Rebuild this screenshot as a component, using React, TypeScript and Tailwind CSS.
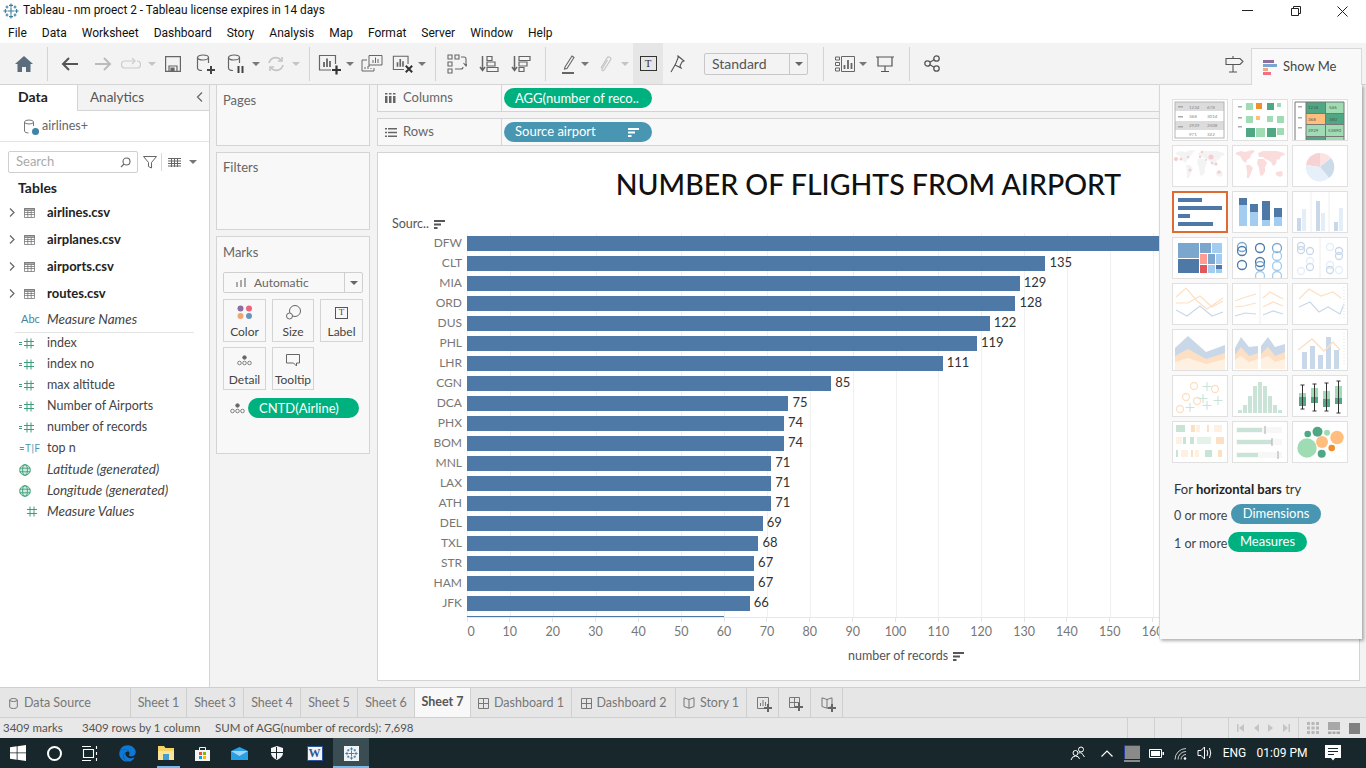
import React from 'react';
import { FaEdge } from 'react-icons/fa';

const BARS: [string, number][] = [
  ['DFW', 172], ['CLT', 135], ['MIA', 129], ['ORD', 128], ['DUS', 122], ['PHL', 119], ['LHR', 111],
  ['CGN', 85], ['DCA', 75], ['PHX', 74], ['BOM', 74], ['MNL', 71], ['LAX', 71], ['ATH', 71],
  ['DEL', 69], ['TXL', 68], ['STR', 67], ['HAM', 67], ['JFK', 66], ['', 60],
];
const PX_PER_UNIT = 4.285;
const TICKS = Array.from({ length: 18 }, (_, i) => i * 10);

const Caret = ({ color = '#777' }: { color?: string }) => (
  <svg width="8" height="4" viewBox="0 0 8 4" className="shrink-0"><path d="M0 0h8L4 4z" fill={color} /></svg>
);

const Cell = ({ className, children }: { className: string; children?: React.ReactNode }) => (
  <div className={`flex items-center justify-center shrink-0 h-full ${className}`}>{children}</div>
);

const Sep = () => <div className="w-px h-[34px] bg-[#d4d4d4] shrink-0" />;

// snowflake-ish tableau mark, made of plus signs
const TableauLogo = ({ size = 16, color = '#3d7f9e' }: { size?: number; color?: string }) => {
  const plus = (x: number, y: number, r: number, k: string) => (
    <path key={k} d={`M${x - r} ${y}H${x + r}M${x} ${y - r}V${y + r}`} />
  );
  return (
    <svg width={size} height={size} viewBox="0 0 20 20" fill="none" stroke={color} strokeWidth="1.4" className="shrink-0">
      {plus(10, 10, 4, 'c')}
      {plus(10, 3, 2.5, 't')}
      {plus(10, 17, 2.5, 'b')}
      {plus(3, 10, 2.5, 'l')}
      {plus(17, 10, 2.5, 'r')}
      {plus(5, 5, 1.8, 'a')}
      {plus(15, 5, 1.8, 'd')}
      {plus(5, 15, 1.8, 'e')}
      {plus(15, 15, 1.8, 'f')}
    </svg>
  );
};

const Cyl = ({ children }: { children?: React.ReactNode }) => (
  <svg width="22" height="22" viewBox="0 0 22 22" fill="none" stroke="#666" strokeWidth="1.2">
    <ellipse cx="9" cy="4.5" rx="5.5" ry="2.5" />
    <path d="M3.5 4.5V15q0 2.5 4.5 2.5M14.5 4.5V10" />
    {children}
  </svg>
);

const ChartBox = ({ children }: { children?: React.ReactNode }) => (
  <svg width="24" height="22" viewBox="0 0 24 22" fill="none" stroke="#666" strokeWidth="1.2">
    <path d="M13 17H1.5V2.5h16V11" />
    <path d="M6 14V9M9 14V5.5M12 14V8" strokeWidth="1.8" />
    {children}
  </svg>
);

function Toolbar() {
  return (
    <div className="h-[42px] bg-[#f3f3f3] border-b border-[#d4d4d4] flex items-center shrink-0">
      <Cell className="w-[47px]">
        <svg width="18" height="16" viewBox="0 0 18 16"><path d="M9 0L0 8h2.5v8h4.5v-5h4v5h4.5V8H18z" fill="#5b6d7c" /></svg>
      </Cell>
      <Sep />
      <Cell className="w-[44px]">
        <svg width="18" height="16" viewBox="0 0 18 16" fill="none" stroke="#555" strokeWidth="2"><path d="M17 8H2M8 2L2 8l6 6" /></svg>
      </Cell>
      <Cell className="w-[22px]">
        <svg width="18" height="16" viewBox="0 0 18 16" fill="none" stroke="#bbb" strokeWidth="2"><path d="M1 8h15M10 2l6 6-6 6" /></svg>
      </Cell>
      <Cell className="w-[34px]">
        <svg width="20" height="12" viewBox="0 0 20 12" fill="none" stroke="#ccc" strokeWidth="1.2"><path d="M13 3H4a3 3 0 000 7h12a3 3 0 000-7" /><path d="M11 0l3 3-3 3" /></svg>
      </Cell>
      <Cell className="w-[8px]"><Caret color="#c4c4c4" /></Cell>
      <Cell className="w-[34px]">
        <svg width="16" height="16" viewBox="0 0 16 16" fill="none" stroke="#666" strokeWidth="1.2"><path d="M.6.6h14.8v14.8H.6z" /><path d="M4 15v-5h8v5" /><path d="M6 12h3v3H6z" fill="#666" /></svg>
      </Cell>
      <Cell className="w-[30px]">
        <Cyl><path d="M13 17h8M17 13v8" stroke="#444" strokeWidth="2" /></Cyl>
      </Cell>
      <Cell className="w-[32px]">
        <Cyl><path d="M13.5 13v7M17.5 13v7" stroke="#444" strokeWidth="2" /></Cyl>
      </Cell>
      <Cell className="w-[8px]"><Caret /></Cell>
      <Cell className="w-[32px]">
        <svg width="18" height="16" viewBox="0 0 18 16" fill="none" stroke="#c4c4c4" strokeWidth="1.6"><path d="M2 7a7 7 0 0112-3M16 9a7 7 0 01-12 3" /><path d="M11 5h4V1M7 11H3v4" /></svg>
      </Cell>
      <Cell className="w-[8px]"><Caret color="#c4c4c4" /></Cell>
      <div className="w-[9px] shrink-0" />
      <Sep />
      <div className="w-[2px] shrink-0" />
      <Cell className="w-[36px]">
        <ChartBox><path d="M14 17h9M18.5 12.500v9" stroke="#333" strokeWidth="2.2" /></ChartBox>
      </Cell>
      <Cell className="w-[4px]"><Caret /></Cell>
      <Cell className="w-[40px]">
        <svg width="22" height="20" viewBox="0 0 22 20" fill="none" stroke="#666" strokeWidth="1"><path d="M8 13V1.500h13V11H8" /><path d="M12 9V6M14.500 9V3.500M17 9V5" /><path d="M6 6H1v11h12v-3" /><path d="M4 15v-2M7 15v-3M10 15v-1" /></svg>
      </Cell>
      <Cell className="w-[22px]">
        <ChartBox><path d="M15 13l7 7M22 13l-7 7" stroke="#333" strokeWidth="2.2" /></ChartBox>
      </Cell>
      <Cell className="w-[16px]"><Caret /></Cell>
      <div className="w-[5px] shrink-0" />
      <Sep />
      <Cell className="w-[42px]">
        <svg width="20" height="20" viewBox="0 0 20 20" fill="none" stroke="#666" strokeWidth="1.1"><path d="M1 1h4v4H1zM8 1h4v4H8zM1 8h4v4H1zM1 15h4v4H1z" /><path d="M14 3h3a2 2 0 012 2v6M16.500 9l2.500 3 1-2M8 15h6a2 2 0 002-2" /></svg>
      </Cell>
      <Cell className="w-[22px]">
        <svg width="20" height="18" viewBox="0 0 20 18" fill="none" stroke="#666" strokeWidth="1.2"><path d="M3.500 1v14M1 12l2.500 3.500L6 12" strokeWidth="1.500" /><path d="M8 1.500h5v4H8zM8 7h8v4H8zM8 12.500h11v4H8z" /></svg>
      </Cell>
      <Cell className="w-[42px]">
        <svg width="20" height="18" viewBox="0 0 20 18" fill="none" stroke="#666" strokeWidth="1.2"><path d="M3.500 1v14M1 12l2.500 3.500L6 12" strokeWidth="1.500" /><path d="M8 1.500h11v4H8zM8 7h8v4H8zM8 12.500h5v4H8z" /></svg>
      </Cell>
      <div className="w-[3px] shrink-0" />
      <Sep />
      <Cell className="w-[29px] justify-end">
        <svg width="14" height="20" viewBox="0 0 14 20" fill="none" stroke="#666" strokeWidth="1.100"><path d="M4 13L11 2l2 1.500L6 14.500 3.500 15z" /><path d="M1 19h12" stroke="#555" strokeWidth="1.800" /></svg>
      </Cell>
      <Cell className="w-[14px] justify-end"><Caret /></Cell>
      <Cell className="w-[23px] justify-end">
        <svg width="14" height="18" viewBox="0 0 14 18" fill="none" stroke="#c4c4c4" strokeWidth="1.200"><path d="M3 13L9 3a2 2 0 013.500 2L6 15a1 1 0 01-2-1l5.500-9" /></svg>
      </Cell>
      <Cell className="w-[17px] justify-end"><Caret color="#c4c4c4" /></Cell>
      <div className="w-[4px] shrink-0" />
      <Cell className="w-[30px] h-[30px] bg-[#e6e6e6]">
        <div className="w-[17px] h-[15px] border border-[#333] flex items-center justify-center text-[11px] leading-none font-['Liberation_Serif',serif] text-[#333]">T</div>
      </Cell>
      <Cell className="w-[28px]">
        <svg width="15" height="18" viewBox="0 0 15 18" fill="none" stroke="#555" strokeWidth="1.100"><path d="M8 1l6 5-2 1-2 4 1 2-6-3 1-2 2-5zM5 10l-4 7" /></svg>
      </Cell>
      <div className="w-[13px] shrink-0" />
      <div className="w-[104px] h-[22px] shrink-0 border border-[#c8c8c8] rounded-[2px] flex items-center text-[14px] text-[#555]">
        <div className="flex-1 pl-[7px]">Standard</div>
        <div className="w-[18px] h-full border-l border-[#c8c8c8] flex items-center justify-center"><Caret color="#666" /></div>
      </div>
      <div className="w-[15px] shrink-0" />
      <Sep />
      <Cell className="w-[31px] justify-end">
        <svg width="20" height="16" viewBox="0 0 20 16" fill="none" stroke="#666" strokeWidth="1"><path d="M.5 1h4v3h-4zM.5 6.500h4v3h-4zM.5 12h4v3h-4zM6.500.5h13v15h-13z" /><path d="M9.500 13V9M13 13V4M16.500 13V7" strokeWidth="1.800" /></svg>
      </Cell>
      <Cell className="w-[12px] justify-end"><Caret /></Cell>
      <Cell className="w-[27px] justify-end">
        <svg width="18" height="16" viewBox="0 0 18 16" fill="none" stroke="#555" strokeWidth="1.200"><path d="M0 1h18M2 1v9h14V1M9 10v5M5 15.500h8" /></svg>
      </Cell>
      <div className="w-[15px] shrink-0" />
      <Sep />
      <Cell className="w-[30px] justify-end">
        <svg width="16" height="17" viewBox="0 0 16 17" fill="none" stroke="#555" strokeWidth="1.300"><circle cx="3.500" cy="8.500" r="2.700" /><circle cx="12.500" cy="3.500" r="2.700" /><circle cx="12.500" cy="13.500" r="2.700" /><path d="M6 7.200l4-2.400M6 9.800l4 2.400" /></svg>
      </Cell>
      <div className="flex-1" />
      <Cell className="w-[20px] mr-[122px]">
        <svg width="19" height="18" viewBox="0 0 19 18" fill="none" stroke="#555" strokeWidth="1.100"><path d="M1 3.500h14l3 3-3 3H1zM8 1v2.500M8 9.500V17M4 17h8" /></svg>
      </Cell>
    </div>
  );
}

const HashIcon = ({ eq = true }: { eq?: boolean }) => (
  <svg width="16" height="11" viewBox="0 0 16 11" fill="none" stroke="#3c9d7a" strokeWidth="1">
    {eq && <path d="M0 4.500h3M0 6.500h3" />}
    <path d="M5 3.500h10M5 7.500h10M8 .5v10M12 .5v10" />
  </svg>
);

const GlobeIcon = () => (
  <svg width="12" height="12" viewBox="0 0 12 12" fill="none" stroke="#3c9d7a" strokeWidth="0.900">
    <circle cx="6" cy="6" r="5.300" fill="#d4ece2" />
    <ellipse cx="6" cy="6" rx="2.400" ry="5.300" />
    <path d="M.7 4.200h10.600M.7 7.800h10.600" />
  </svg>
);

const TableIcon = () => (
  <svg width="11" height="11" viewBox="0 0 11 11" fill="none" stroke="#777" strokeWidth="0.800">
    <path d="M.5 1.500h10v9H.5z" /><path d="M.5 1.500h10v2H.5z" fill="#aaa" /><path d="M.5 5.500h10M.5 7.500h10M3.800 3.500v7M7.200 3.500v7" />
  </svg>
);

function DataPane() {
  const tables = ['airlines.csv', 'airplanes.csv', 'airports.csv', 'routes.csv'];
  const fields: [React.ReactNode, string, boolean][] = [
    [<HashIcon />, 'index', false],
    [<HashIcon />, 'index no', false],
    [<HashIcon />, 'max altitude', false],
    [<HashIcon />, 'Number of Airports', false],
    [<HashIcon />, 'number of records', false],
    [<span className="text-[10px] text-[#4996b2] tracking-[0.5px] font-['Roboto',sans-serif]">=T|F</span>, 'top n', false],
    [<GlobeIcon />, 'Latitude (generated)', true],
    [<GlobeIcon />, 'Longitude (generated)', true],
    [<span className="pl-[3px] flex"><HashIcon eq={false} /></span>, 'Measure Values', true],
  ];
  return (
    <div className="w-[210px] shrink-0 bg-white border-r border-[#d4d4d4] flex flex-col">
      <div className="h-[26px] flex text-[13.500px] shrink-0">
        <div className="w-[77px] flex items-center pl-[18px] pb-[3px] font-bold text-[#222] text-[14px]">Data</div>
        <div className="flex-1 flex items-center justify-between pl-[12px] pr-[6px] pb-px text-[#555] bg-[#f3f3f3] border-l border-b border-[#d4d4d4]">
          <span>Analytics</span>
          <svg width="7" height="10" viewBox="0 0 7 10" fill="none" stroke="#666" strokeWidth="1.200"><path d="M6 .5L1.500 5 6 9.500" /></svg>
        </div>
      </div>
      <div className="h-[31px] shrink-0 border-b border-[#e4e4e4] flex items-center pl-[23px] gap-[6px] text-[12.500px] text-[#666]">
        <span className="relative flex">
          <svg width="13" height="15" viewBox="0 0 13 15" fill="none" stroke="#777" strokeWidth="1"><ellipse cx="6" cy="3" rx="4.500" ry="2" /><path d="M1.500 3v9q0 2 4 2M10.500 3v4" /></svg>
          <span className="absolute right-[-3px] bottom-[-1px] w-[7px] h-[7px] rounded-full bg-[#3f84a8]" />
        </span>
        airlines+
      </div>
      <div className="flex items-center mt-[9px] h-[22px] pl-[8px] shrink-0">
        <div className="w-[130px] h-[22px] border border-[#cfcfcf] rounded-[2px] flex items-center justify-between pl-[7px] pr-[6px] text-[13px] text-[#aaa]">
          Search
          <svg width="11" height="11" viewBox="0 0 11 11" fill="none" stroke="#666" strokeWidth="1.100"><circle cx="6.500" cy="4.500" r="3.500" /><path d="M4 7l-3 3" /></svg>
        </div>
        <svg width="14" height="13" viewBox="0 0 14 13" fill="none" stroke="#666" strokeWidth="1" className="ml-[5px]"><path d="M.5.500h13L8.500 6.500V12l-3-1.500v-4z" /></svg>
        <div className="w-px h-[18px] bg-[#d8d8d8] ml-[4px]" />
        <svg width="13" height="9" viewBox="0 0 13 9" fill="none" stroke="#666" strokeWidth="1" className="ml-[6px]"><path d="M0 .5h13M0 3h13M0 5.500h13M0 8h13M3.500 0v9M6.500 0v9M9.500 0v9" /></svg>
        <span className="ml-[8px]"><Caret /></span>
      </div>
      <div className="mt-[6px] h-[18px] pl-[18px] text-[14px] font-bold text-[#222] leading-[18px] shrink-0">Tables</div>
      <div className="mt-[2px] flex flex-col">
        {tables.map(t => (
          <div key={t} className="h-[27px] flex items-center">
            <svg width="6" height="9" viewBox="0 0 6 9" fill="none" stroke="#666" strokeWidth="1.200" className="ml-[9px]"><path d="M1 .5L5 4.500 1 8.500" /></svg>
            <span className="ml-[9px] flex"><TableIcon /></span>
            <span className="ml-[12px] text-[13px] font-bold text-[#222]">{t}</span>
          </div>
        ))}
      </div>
      <div className="h-[26px] mx-[15px] border-b border-[#e4e4e4] flex items-center text-[13.500px] text-[#444]">
        <span className="w-[32px] pl-[6px] text-[11px] text-[#4a7f9e]">Abc</span>
        <span className="italic">Measure Names</span>
      </div>
      <div className="flex flex-col">
        {fields.map(([icon, name, italic]) => (
          <div key={name} className="h-[21px] flex items-center text-[12.500px] text-[#444]">
            <div className="w-[47px] pl-[19px] flex items-center">{icon}</div>
            <span className={italic ? 'italic text-[13.500px]' : ''}>{name}</span>
          </div>
        ))}
      </div>
    </div>
  );
}

const MarkBtn = ({ label, children }: { label: string; children: React.ReactNode }) => (
  <div className="h-[43px] border border-[#d4d4d4] flex flex-col items-center text-[12px] text-[#444] leading-[14px]">
    <div className="h-[25px] flex items-center justify-center">{children}</div>
    {label}
  </div>
);

const DetailIcon = () => (
  <svg width="15" height="11" viewBox="0 0 15 11" fill="none" stroke="#666" strokeWidth="0.800">
    <circle cx="7.500" cy="2.500" r="1.800" fill="#666" /><circle cx="2.500" cy="8" r="1.800" /><circle cx="7.500" cy="8" r="1.800" /><circle cx="12.500" cy="8" r="1.800" />
  </svg>
);

function MiddleCol() {
  const card = 'bg-[#f8f8f8] border border-[#d4d4d4] px-[6px] pt-[6px] text-[13px] text-[#666] leading-[17px]';
  return (
    <div className="w-[167px] shrink-0 pl-[6px] pr-[7px] flex flex-col gap-[6px]">
      <div className={`h-[61px] border-t-0 ${card}`}><div className="pt-px">Pages</div></div>
      <div className={`h-[78px] ${card}`}>Filters</div>
      <div className={`h-[218px] ${card}`}>
        <div className="pt-px">Marks</div>
        <div className="mt-[11px] h-[21px] w-[140px] border border-[#cfcfcf] rounded-[2px] flex items-center text-[12px] text-[#666]">
          <svg width="11" height="9" viewBox="0 0 11 9" fill="#aaa" className="ml-[12px]"><path d="M0 4h2v5H0zM4 2h2v7H4zM8 0h2v9H8z" /></svg>
          <span className="ml-[7px] flex-1">Automatic</span>
          <div className="w-[18px] h-full border-l border-[#cfcfcf] flex items-center justify-center"><Caret color="#666" /></div>
        </div>
        <div className="mt-[6px] grid grid-cols-[43px_42px_43px] gap-x-[6px] gap-y-[5px]">
          <MarkBtn label="Color">
            <svg width="16" height="15" viewBox="0 0 16 15"><circle cx="3.500" cy="3.500" r="3" fill="#8c6fa0" /><circle cx="12" cy="3.500" r="3" fill="#f0637a" /><circle cx="3.500" cy="11" r="3" fill="#f2a56e" /><circle cx="12" cy="11" r="3" fill="#6a94bd" /></svg>
          </MarkBtn>
          <MarkBtn label="Size">
            <svg width="15" height="15" viewBox="0 0 15 15" fill="none" stroke="#666" strokeWidth="1"><circle cx="9" cy="6" r="5.500" /><circle cx="3.500" cy="11" r="3" fill="#f8f8f8" /></svg>
          </MarkBtn>
          <MarkBtn label="Label">
            <div className="w-[13px] h-[12px] border border-[#555] flex items-center justify-center text-[9px] leading-none font-['Liberation_Serif',serif] text-[#444]">T</div>
          </MarkBtn>
          <MarkBtn label="Detail"><DetailIcon /></MarkBtn>
          <MarkBtn label="Tooltip">
            <svg width="14" height="13" viewBox="0 0 14 13" fill="none" stroke="#666" strokeWidth="1"><path d="M.5.500h13v8.500h-3v3l-3-3H.5z" /></svg>
          </MarkBtn>
        </div>
        <div className="mt-[8px] flex items-center">
          <span className="ml-[7px] flex"><DetailIcon /></span>
          <div className="ml-[3px] w-[111px] h-[20px] rounded-full bg-[#00b180] text-white text-[13px] leading-[20px] pl-[11px]">CNTD(Airline)</div>
        </div>
      </div>
    </div>
  );
}

const Shelf = ({ icon, label, pill }: { icon: React.ReactNode; label: string; pill: React.ReactNode }) => (
  <div className="flex border border-[#d4d4d4] border-t-0 bg-[#f8f8f8] shrink-0 h-[27px]">
    <div className="w-[124px] border-r border-[#d4d4d4] flex items-center text-[13px] text-[#666]">
      <span className="w-[25px] pl-[7px] flex">{icon}</span>
      {label}
    </div>
    <div className="flex items-center pl-[2px]">{pill}</div>
  </div>
);

const SortIcon = ({ color = '#555' }: { color?: string }) => (
  <svg width="11" height="9" viewBox="0 0 11 9" fill={color} className="shrink-0"><path d="M0 0h11v2H0zM0 3.500h7v2H0zM0 7h3.500v2H0z" /></svg>
);

function ChartCard() {
  return (
    <div className="flex-1 bg-white border border-[#d4d4d4] overflow-hidden flex flex-col font-['Lato',sans-serif]">
      <div className="pt-[14px] h-[49px] text-center text-[28.500px] leading-[34px] font-medium text-[#111] shrink-0">NUMBER OF FLIGHTS FROM AIRPORT</div>
      <div className="mt-[14px] h-[16px] pl-[14px] flex items-center gap-[5px] text-[12.500px] text-[#555] shrink-0">
        Sourc.. <SortIcon />
      </div>
      <div className="relative mt-px h-[384px] overflow-hidden shrink-0">
        {TICKS.map(t => (
          <div key={t} className="absolute top-0 bottom-0 w-px bg-[#f0f0f0]" style={{ left: 89 + t * PX_PER_UNIT }} />
        ))}
        <div className="relative flex flex-col">
          {BARS.map(([code, v], i) => (
            <div key={i} className="h-[20px] flex items-center shrink-0">
              <div className="w-[84px] shrink-0 text-right text-[12px] text-[#777]">{code}</div>
              <div className="ml-[5px] h-[15px] bg-[#4e79a7] shrink-0" style={{ width: v * PX_PER_UNIT }} />
              {code && <div className="ml-[4px] text-[13px] text-[#333]">{v}</div>}
            </div>
          ))}
        </div>
      </div>
      <div className="relative h-[30px] border-t border-[#e8e8e8] ml-[89px] shrink-0 text-[12.500px] text-[#777]">
        {TICKS.map(t => (
          <div key={t} className="absolute top-0 flex flex-col items-center w-[30px] -ml-[15px]" style={{ left: t * PX_PER_UNIT }}>
            <div className="w-px h-[4px] bg-[#e4e4e4]" />
            <div className={`mt-[1px] leading-[18px] ${t === 0 ? 'pl-[8px]' : ''}`}>{t}</div>
          </div>
        ))}
      </div>
      <div className="mt-px pl-[470px] h-[16px] flex items-center gap-[5px] text-[12.500px] text-[#555] shrink-0">
        number of records <SortIcon />
      </div>
    </div>
  );
}

function MainCol() {
  return (
    <div className="flex-1 min-w-0 flex flex-col pr-[6px] pb-[6px]">
      <Shelf
        icon={<svg width="11" height="10" viewBox="0 0 11 10" fill="#666"><path d="M0 3h2.500v7H0zM4 3h2.500v7H4zM8 3h2.500v7H8zM0 0h2.500v1.500H0zM4 0h2.500v1.500H4zM8 0h2.500v1.500H8z" /></svg>}
        label="Columns"
        pill={<div className="w-[148px] h-[20px] rounded-full bg-[#00b180] text-white text-[13px] leading-[20px] pl-[11px]">AGG(number of reco..</div>}
      />
      <div className="h-[6px] shrink-0" />
      <div className="border-t border-[#d4d4d4]">
        <Shelf
          icon={<svg width="12" height="9" viewBox="0 0 12 9" fill="#666"><path d="M0 0h2v1.500H0zM3 0h9v1.500H3zM0 3.700h2v1.500H0zM3 3.700h9v1.500H3zM0 7.500h2V9H0zM3 7.500h9V9H3z" /></svg>}
          label="Rows"
          pill={
            <div className="w-[148px] h-[20px] rounded-full bg-[#4996b2] text-white text-[13px] flex items-center pl-[11px] pr-[13px] justify-between">
              Source airport <SortIcon color="#fff" />
            </div>
          }
        />
      </div>
      <div className="h-[6px] shrink-0" />
      <ChartCard />
    </div>
  );
}

const Thumb = ({ selected, children }: { selected?: boolean; children: React.ReactNode }) => (
  <div className={`w-[56px] h-[42px] bg-white overflow-hidden ${selected ? 'border-2 border-[#de6b32]' : 'border border-[#e0e0e0]'}`}>
    <svg viewBox={selected ? '2 2 52 38' : '1 1 54 40'} className="w-full h-full block" fill="none">{children}</svg>
  </div>
);

const WORLD = 'M3 8L9 6L13 7L20 5L23 6L19 10L18 13L15 15L14 18L11 16L8 11L5 10ZM14 20L18 20L21 23L19 28L17 33L15 33L15 27ZM26 8L31 6L38 6L45 6L52 8L53 10L49 11L47 15L45 14L44 19L41 21L39 17L36 15L33 14L31 12L27 12ZM26 14L32 14L35 18L33 22L33 27L30 31L28 30L27 23L25 18ZM44 27L50 26L51 30L48 32L44 30Z';
const G1 = '#9fdcb3';
const G2 = '#4fa783';
const O1 = '#ffbe7d';
const O2 = '#f28e2b';
const B1 = '#4e79a7';
const B2 = '#a3cdf0';
const FB = '#c9d8e8';
const FB2 = '#e3eef9';
const FO = '#fde0c4';
const FO2 = '#fff1e2';
const FG = '#c9e4d6';

const rects = (list: [number, number, number, number, string][]) =>
  list.map(([x, y, w, h, c], i) => <rect key={i} x={x} y={y} width={w} height={h} fill={c} />);

const rings = (list: [number, number, number, string][], sw = 1.300) =>
  list.map(([x, y, r, c], i) => <circle key={i} cx={x} cy={y} r={r} stroke={c} strokeWidth={sw} />);

const lines = (list: [string, string][], sw = 1.200) =>
  list.map(([p, c], i) => <polyline key={i} points={p} stroke={c} strokeWidth={sw} fill="none" />);

const THUMBS: React.ReactNode[] = [
  <g fontSize="4.500" fill="#888" fontFamily="Lato, sans-serif">
    {rects([[3, 3, 49, 9, '#dcdcdc'], [3, 22, 49, 9, '#dcdcdc'], [6, 7, 5, 1.500, '#aaa'], [6, 17, 5, 1.500, '#aaa'], [6, 27, 5, 1.500, '#aaa']])}
    <rect x="3" y="3" width="49" height="36" stroke="#b5b5b5" fill="none" />
    <text x="17" y="10">1234</text><text x="35" y="10">678</text>
    <text x="17" y="19">368</text><text x="35" y="19">3014</text>
    <text x="17" y="28">2929</text><text x="35" y="28">2508</text>
    <text x="17" y="37">971</text><text x="35" y="37">322</text>
  </g>,
  <g>{rects([[6, 7, 4, 1.500, '#aaa'], [6, 18, 4, 1.500, '#aaa'], [6, 27, 4, 1.500, '#aaa'], [14, 4, 7, 7, G1], [24, 4, 6, 6, O2], [35, 4, 7, 7, G2], [45, 4, 4, 4, G1], [14, 17, 7, 7, G1], [24, 17, 4, 4, O1], [35, 17, 6, 6, G1], [45, 17, 7, 7, G1], [14, 29, 9, 9, G2], [24, 29, 9, 9, G1], [35, 29, 9, 9, G2], [45, 29, 7, 7, G1]])}</g>,
  <g fontSize="4.500" fill="#555" fontFamily="Lato, sans-serif">
    {rects([[6, 7, 4, 1.500, '#aaa'], [6, 18, 4, 1.500, '#aaa'], [6, 28, 4, 1.500, '#aaa'], [14, 3, 19, 11, G2], [34, 3, 18, 11, G1], [14, 15, 19, 10, O1], [34, 15, 18, 10, G2], [14, 26, 19, 11, G1], [34, 26, 18, 11, G1], [14, 38, 19, 3, G2], [34, 38, 18, 3, G1]])}
    <path d="M3 3H52V41M3 3V41M14 3V41M33.500 3V41M14 14.500H52M14 25.500H52M14 37.500H52" stroke="#777" strokeWidth="1" fill="none" />
    <text x="16" y="10">1234</text><text x="37" y="10">546</text>
    <text x="16" y="22">368</text><text x="37" y="22">380</text>
    <text x="16" y="33">2929</text><text x="36" y="33">53890</text>
  </g>,
  <g>
    <path d={WORLD} fill="#f3f3f3" />
    {[[4, 14, 2], [9, 14, 1.500], [16, 12, 1.200], [18, 25, 1.500], [28, 12, 1.200], [30, 7, 1.200], [40, 18, 1.200], [39, 12, 2.500], [44, 19, 1.500], [47, 27, 1.800], [34, 15, 1]].map(([x, y, r], i) => (
      <circle key={i} cx={x} cy={y} r={r} fill="#f6cccc" />
    ))}
  </g>,
  <path d={WORLD} fill="#fbdcdc" />,
  <g>
    <path d="M28 22L14 20A14 14 0 0128 8Z" fill="#f6d2d2" />
    <path d="M28 22V8A14 14 0 0139 13Z" fill="#fbe3e3" />
    <path d="M28 22L39 13A14 14 0 0137 33Z" fill="#ccdbe9" />
    <path d="M28 22L37 33A14 14 0 0114 20Z" fill="#e6f0fa" />
  </g>,
  <g>{rects([[6, 7, 24, 4, B1], [6, 15, 44, 4, B1], [6, 23, 12, 4, B1], [6, 31, 35, 4, B1]])}</g>,
  <g>{rects([[7, 7, 8, 7, B1], [7, 14, 8, 21, B2], [18, 13, 8, 8, B1], [18, 21, 8, 14, B2], [30, 10, 8, 19, B1], [30, 29, 8, 6, B2], [42, 17, 8, 9, B1], [42, 26, 8, 9, B2]])}</g>,
  <g>
    {rects([[5, 27, 4, 13, FB], [10, 18, 4, 22, FB2], [24, 10, 4, 30, FB], [29, 22, 4, 18, FB2], [42, 31, 4, 9, FB], [47, 17, 4, 23, FB2]])}
    <path d="M19 1V41M37 1V41" stroke="#eee" />
  </g>,
  <g>{rects([[6, 6, 21, 15, '#7ba7cf'], [6, 22, 21, 14, B1], [28, 6, 11, 10, '#7ba7cf'], [40, 6, 10, 10, B2], [28, 17, 7, 10, '#ff9d92'], [36, 17, 7, 10, '#7ba7cf'], [44, 17, 6, 10, B2], [28, 28, 7, 8, '#e15759'], [36, 28, 7, 8, B2], [44, 28, 6, 4, B1], [44, 32, 6, 4, B2]])}</g>,
  <g>{rings([[10, 10, 4.500, '#7ba7cf'], [10, 14, 4.500, B1], [10, 28, 4.500, B1], [28, 11, 4.500, B1], [28, 25, 4.500, B1], [28, 29, 4.500, '#7ba7cf'], [28, 39, 4.500, B2], [45, 11, 4.500, '#7ba7cf'], [45, 19, 4.500, B2], [45, 29, 4.500, B2], [45, 39, 4.500, B2]])}</g>,
  <g>
    {rings([[9, 9, 3.500, FB], [9, 13, 3.500, FB], [18, 14, 3.500, FB], [9, 34, 3.500, FB2], [18, 30, 3.500, FB], [18, 24, 3.500, FB2], [38, 10, 3.500, FB2], [47, 14, 3.500, FB], [47, 19, 3.500, FB], [38, 28, 3.500, FB2], [38, 33, 3.500, FB], [47, 33, 3.500, FB2]])}
    <path d="M28 1V41" stroke="#eee" />
  </g>,
  <g>{lines([['4,14 14,5 25,18 35,26 51,15', FO], ['4,20 16,20 28,13 40,24 51,18', FO], ['4,27 15,33 28,23 40,33 51,29', FB]])}</g>,
  <g>
    {lines([['3,18 11,15 24,11', FO], ['3,24 12,23 24,20', FO], ['3,33 13,30 24,31', FB], ['31,15 38,9 51,16', FO], ['31,24 41,19 51,23', FO], ['31,32 41,28 51,31', FB]])}
    <path d="M28 1V41" stroke="#eee" />
  </g>,
  <g>
    {lines([['7,16 17,6 29,13 41,9 49,15', FO], ['7,24 18,19 27,29 36,24 48,31 52,21', FB]])}
    <path d="M52 4V36" stroke="#f1f1f1" strokeDasharray="1 2" strokeWidth="2" />
  </g>,
  <g>
    <path d="M3 19L16 7L34 23L53 16V41H3Z" fill={FB} />
    <path d="M3 27L16 20L34 30L53 24V41H3Z" fill={FO} />
    <path d="M3 33L16 29L34 35L53 30V41H3Z" fill={FO2} />
  </g>,
  <g>
    <path d="M3 19L9 8L17 18L26 17V40H3Z" fill={FB} />
    <path d="M3 26L9 18L17 27L26 24V40H3Z" fill={FO} />
    <path d="M3 31L9 27L17 33L26 30V40H3Z" fill={FO2} />
    <path d="M29 17L36 8L43 18L53 15V40H29Z" fill={FB} />
    <path d="M29 25L36 18L43 27L53 23V40H29Z" fill={FO} />
    <path d="M29 30L36 27L43 33L53 30V40H29Z" fill={FO2} />
  </g>,
  <g>
    {rects([[10, 23, 5, 17, FB], [18, 17, 5, 23, FB], [26, 26, 5, 14, FB], [34, 8, 5, 32, FB], [42, 21, 5, 19, FB]])}
    <polyline points="6,21 20,10 32,22 41,13 48,21" stroke={FO} strokeWidth="1.400" fill="none" />
    <path d="M52 4V36" stroke="#f1f1f1" strokeDasharray="1 2" strokeWidth="2" />
  </g>,
  <g>
    {rings([[8, 34, 3.500, FO], [22, 11, 3.500, FO], [14, 22, 3.500, FO], [25, 26, 3.500, FO], [43, 14, 3.500, FO]])}
    <path d="M35 7V16M30.500 11.500H39.500M31 19V28M26.500 23.500H35.500M18 28V37M13.500 32.500H22.500M35 26V35M30.500 30.500H39.500M46 21V30M41.500 25.500H50.500" stroke={FG} strokeWidth="1.100" />
  </g>,
  <g>{rects([[6, 35, 4, 3, FG], [11, 30, 4, 8, FG], [16, 21, 4, 17, FG], [21, 11, 4, 27, FG], [26, 7, 4, 31, FG], [31, 11, 4, 27, FG], [36, 21, 4, 17, FG], [41, 30, 4, 8, FG], [46, 35, 4, 3, FG]])}</g>,
  <g>
    {rects([[7, 18, 7, 8, G1], [7, 22, 7, 9, G2], [19, 13, 7, 9, G1], [19, 22, 7, 6, G2], [31, 16, 7, 10, G1], [31, 24, 7, 8, G2], [43, 11, 7, 12, G1], [43, 23, 7, 6, G2]])}
    <path d="M8.500 10H12.500M10.500 10V34M8.500 34H12.500M20.500 9H24.500M22.500 9V36M20.500 36H24.500M32.500 8H36.500M34.500 8V36M32.500 36H36.500M44.500 6H48.500M46.500 6V38M44.500 38H48.500" stroke="#333" strokeWidth="1" />
  </g>,
  <g>{rects([[4, 4, 9, 7, FG], [19, 4, 4, 7, FO], [24, 4, 4, 7, FO2], [35, 4, 2, 7, FO], [42, 4, 8, 7, FO2], [4, 16, 6, 7, FO2], [11, 16, 3, 7, FG], [18, 16, 4, 7, FG], [25, 16, 14, 7, '#e4f2ea'], [44, 16, 8, 7, FO], [4, 29, 2, 7, FG], [9, 29, 7, 7, FO2], [19, 29, 2, 7, FO], [23, 29, 4, 7, FO2], [33, 29, 7, 7, FG], [46, 29, 4, 7, FO]])}</g>,
  <g>
    {rects([[4, 6, 46, 6, '#f7f7f7'], [4, 18, 46, 6, '#f7f7f7'], [4, 31, 46, 6, '#f7f7f7'], [5, 7, 25, 4, FG], [5, 19, 35, 4, FG], [5, 32, 21, 4, FG]])}
    <path d="M33 5V13M40 17V25M46 30V38" stroke="#aaa" strokeWidth="1" />
  </g>,
  <g>
    <circle cx="15" cy="27" r="9.700" fill={G1} />
    <circle cx="30" cy="21" r="6" fill={O1} />
    <circle cx="45" cy="16.500" r="6.700" fill={O1} />
    <circle cx="25.500" cy="10.700" r="5" fill={G2} />
    <circle cx="15.700" cy="13" r="3.300" fill={G2} />
    <circle cx="35" cy="11.700" r="3" fill={G1} />
    <circle cx="39.700" cy="27" r="3.300" fill={O2} />
    <circle cx="29.700" cy="32.700" r="4" fill={G2} />
  </g>,
];

function ShowMe() {
  return (
    <div className="absolute top-[48px] right-[4px] w-[203px] flex flex-col items-end">
      <div className="relative z-10 -mb-px w-[111px] h-[37px] bg-[#f9f9f9] border-t border-x border-[#d8d8d8] flex items-center pl-[11px] gap-[6px] text-[13px] text-[#444]">
        <svg width="14" height="15" viewBox="0 0 14 15">
          <path d="M0 0h11v3H0z" fill="#8c6fa0" /><path d="M0 4h14v3H0z" fill="#7ba7cf" /><path d="M0 8h5v3H0z" fill="#f4a582" /><path d="M0 12h8v3H0z" fill="#f0717f" />
        </svg>
        Show Me
      </div>
      <div className="w-full h-[555px] bg-[#f9f9f9] border-t border-l border-[#d8d8d8] shadow-[2px_2px_3px_rgba(0,0,0,0.3)] pt-[14px] pl-[12px]">
        <div className="grid grid-cols-[56px_56px_56px] gap-[4px]">
          {THUMBS.map((t, i) => (
            <Thumb key={i} selected={i === 6}>{t}</Thumb>
          ))}
        </div>
        <div className="mt-[18px] pl-[2px] text-[13px] leading-[17px] text-[#333]">
          For <b className="text-[#222]">horizontal bars</b> try
        </div>
        <div className="mt-[6px] h-[20px] pl-[2px] flex items-start text-[12.500px] text-[#444]">
          <span className="w-[57px] mt-[2px] leading-[20px]">0 or more</span>
          <div className="w-[90px] h-[20px] rounded-full bg-[#4996b2] text-white text-center text-[13px] leading-[19px]">Dimensions</div>
        </div>
        <div className="mt-[8px] h-[20px] pl-[2px] flex items-start text-[12.500px] text-[#444]">
          <span className="w-[54px] mt-[2px] leading-[20px]">1 or more</span>
          <div className="w-[79px] h-[20px] rounded-full bg-[#00b180] text-white text-center text-[13px] leading-[19px]">Measures</div>
        </div>
      </div>
    </div>
  );
}

const TabIconGrid = () => (
  <svg width="11" height="11" viewBox="0 0 11 11" fill="none" stroke="#777" strokeWidth="1" className="shrink-0"><path d="M.5.500h10v10H.5zM.5 5.500h10M5.500.5v10" /></svg>
);
const TabIconBook = () => (
  <svg width="12" height="12" viewBox="0 0 12 12" fill="none" stroke="#777" strokeWidth="1" className="shrink-0"><path d="M6 2.500L1 .8v8.700l5 1.700 5-1.700V.8zM6 2.500v8.700" /></svg>
);
const PlusMark = () => (
  <span className="absolute right-[-3px] bottom-[-3px] flex">
    <svg width="8" height="8" viewBox="0 0 8 8"><path d="M3 0h2v3h3v2H5v3H3V5H0V3h3z" fill="#666" /></svg>
  </span>
);

function Tabs() {
  const sheets = [['Sheet 1', 'w-[56px]'], ['Sheet 3', 'w-[57px]'], ['Sheet 4', 'w-[57px]'], ['Sheet 5', 'w-[57px]'], ['Sheet 6', 'w-[57px]']];
  const tab = 'h-full border-r border-[#cfcfcf] flex items-center justify-center shrink-0';
  return (
    <div className="h-[31px] shrink-0 bg-[#e6e6e6] border-y border-[#cfcfcf] flex text-[12.500px] text-[#777]">
      <div className={`${tab} w-[131px] justify-start pl-[9px] pt-px gap-[6px]`}>
        <svg width="9" height="11" viewBox="0 0 9 11" fill="none" stroke="#777" strokeWidth="1"><ellipse cx="4.500" cy="2" rx="3.800" ry="1.500" /><path d="M.7 2v7q0 1.500 3.800 1.500T8.300 9V2" /></svg>
        Data Source
      </div>
      {sheets.map(([s, w]) => (
        <div key={s} className={`${tab} pt-px ${w}`}>{s}</div>
      ))}
      <div className={`${tab} w-[56px] bg-[#f8f8f8] font-bold text-[#555]`}>Sheet 7</div>
      <div className={`${tab} w-[101px] pt-px gap-[5px]`}><TabIconGrid />Dashboard 1</div>
      <div className={`${tab} w-[104px] pt-px gap-[5px]`}><TabIconGrid />Dashboard 2</div>
      <div className={`${tab} w-[71px] pt-px gap-[5px]`}><TabIconBook />Story 1</div>
      <div className={`${tab} w-[32px]`}>
        <span className="relative flex">
          <svg width="12" height="12" viewBox="0 0 12 12" fill="none" stroke="#777" strokeWidth="1"><path d="M.5.500h11v11H.5z" /><path d="M3.500 9V6M6 9V3M8.500 9V5" /></svg>
          <PlusMark />
        </span>
      </div>
      <div className={`${tab} w-[32px]`}><span className="relative flex"><TabIconGrid /><PlusMark /></span></div>
      <div className={`${tab} w-[32px]`}><span className="relative flex"><TabIconBook /><PlusMark /></span></div>
    </div>
  );
}

function StatusBar() {
  return (
    <div className="h-[20px] shrink-0 bg-[#e8e8e8] flex items-center text-[11.500px] text-[#555]">
      <span className="ml-[3px] w-[79px]">3409 marks</span>
      <span className="w-[133px]">3409 rows by 1 column</span>
      <span className="flex-1">SUM of AGG(number of records): 7,698</span>
      <div className="w-[27px] h-full border-l border-[#d0d0d0]" />
      <div className="w-[27px] h-full border-l border-[#d0d0d0]" />
      <div className="w-[47px] h-full border-l border-[#d0d0d0]" />
      <div className="w-[70px] h-full border-l border-[#d0d0d0] flex items-center justify-around px-[3px]">
        <svg width="7" height="8" viewBox="0 0 7 8" fill="#c4c4c4"><path d="M0 0h1.500v8H0zM7 0v8L2 4z" /></svg>
        <svg width="5" height="8" viewBox="0 0 5 8" fill="#c4c4c4"><path d="M5 0v8L0 4z" /></svg>
        <svg width="5" height="8" viewBox="0 0 5 8" fill="#c4c4c4"><path d="M0 0v8l5-4z" /></svg>
        <svg width="7" height="8" viewBox="0 0 7 8" fill="#c4c4c4"><path d="M7 0H5.500v8H7zM0 0v8l5-4z" /></svg>
      </div>
      <div className="w-[68px] h-full border-l border-[#d0d0d0] flex items-center pl-[8px] gap-[9px]">
        <svg width="12" height="12" viewBox="0 0 12 12" fill="#b8b8b8"><path d="M0 0h3v3H0zM4.500 0h3v3h-3zM9 0h3v3H9zM0 4.500h3v3H0zM4.500 4.500h3v3h-3zM9 4.500h3v3H9zM0 9h3v3H0zM4.500 9h3v3h-3zM9 9h3v3H9z" /></svg>
        <svg width="12" height="12" viewBox="0 0 12 12" fill="#a8a8a8"><path d="M0 0h12v8H0zM0 9.500h3.500V12H0zM4.500 9.500h3V12h-3zM8.500 9.500H12V12H8.500z" /></svg>
        <div className="w-[11px] h-[11px] bg-[#808080]" />
      </div>
    </div>
  );
}

function Taskbar() {
  return (
    <div className="h-[30px] shrink-0 bg-[#18272b] flex items-center text-white font-['Roboto',sans-serif] text-[12px]">
      <Cell className="w-[36px]">
        <svg width="16" height="16" viewBox="0 0 16 16" fill="#fff"><path d="M0 2.300L6.700 1.300V7.500H0zM7.500 1.200L16 0V7.500H7.500zM0 8.300H6.700V14.700L0 13.700zM7.500 8.300H16V16L7.500 14.800z" /></svg>
      </Cell>
      <Cell className="w-[36px]"><div className="w-[15px] h-[15px] rounded-full border-2 border-white" /></Cell>
      <Cell className="w-[36px]">
        <svg width="16" height="15" viewBox="0 0 16 15" fill="none" stroke="#fff" strokeWidth="1.100"><path d="M0 .5h9M0 14.500h9M1.500 3.500h10v8h-10zM14.500 0v3M14.500 6v3M14.500 12v3" /></svg>
      </Cell>
      <Cell className="w-[39px]"><FaEdge size={17} color="#0f78d4" /></Cell>
      <Cell className="w-[37px] relative">
        <svg width="16" height="14" viewBox="0 0 16 14"><path d="M0 0h6l1.500 2H16v12H0z" fill="#f6d365" /><path d="M0 5h16v9H0z" fill="#fbe49a" /><path d="M5 8h6v6H5z" fill="#3f9fd1" /></svg>
        <div className="absolute left-[10px] right-[4px] bottom-0 h-[2px] bg-[#76b9ed]" />
      </Cell>
      <Cell className="w-[37px]">
        <svg width="15" height="15" viewBox="0 0 15 15"><path d="M0 4h15v11H0z" fill="#f4f4f4" /><path d="M4.500 4V1.500h6V4" fill="none" stroke="#f4f4f4" /><path d="M4 6h3v3H4z" fill="#f25022" /><path d="M8 6h3v3H8z" fill="#7fba00" /><path d="M4 10h3v3H4z" fill="#00a4ef" /><path d="M8 10h3v3H8z" fill="#ffb900" /></svg>
      </Cell>
      <Cell className="w-[37px]">
        <svg width="17" height="13" viewBox="0 0 17 13"><path d="M0 4L8.500 0 17 4v9H0z" fill="#2b9fe6" /><path d="M0 4l8.500 5L17 4" fill="#9fd6f5" /></svg>
      </Cell>
      <Cell className="w-[38px]">
        <svg width="12" height="14" viewBox="0 0 12 14"><path d="M6 0l6 2v5q0 4-6 7-6-3-6-7V2z" fill="#f4f4f4" /><path d="M5.500 1v12M0 6.500h12" stroke="#18272b" strokeWidth="1" /></svg>
      </Cell>
      <Cell className="w-[37px]">
        <div className="w-[16px] h-[15px] bg-[#f4f4f4] border border-[#2b579a] text-[#2b579a] font-bold text-[12px] leading-[13px] text-center font-['Liberation_Serif',serif]">W</div>
      </Cell>
      <Cell className="w-[36px] bg-[#3a4d52] relative">
        <div className="w-[15px] h-[15px] bg-[#f4f4f4] flex items-center justify-center"><TableauLogo size={13} color="#2f7fb5" /></div>
        <div className="absolute inset-x-0 bottom-0 h-[2px] bg-[#76b9ed]" />
      </Cell>
      <div className="flex-1" />
      <Cell className="w-[32px]">
        <svg width="16" height="15" viewBox="0 0 16 15" fill="none" stroke="#fff" strokeWidth="1"><circle cx="5.500" cy="7" r="2.500" /><circle cx="11" cy="3.500" r="2.500" /><path d="M1 14q1-4 4.500-4t4 3M8.500 7q2.500-.5 3 0t3 4" /></svg>
      </Cell>
      <Cell className="w-[26px]">
        <svg width="12" height="7" viewBox="0 0 12 7" fill="none" stroke="#fff" strokeWidth="1.200"><path d="M.5 6.500L6 1l5.500 5.500" /></svg>
      </Cell>
      <Cell className="w-[24px]">
        <div className="w-[16px] h-[17px] flex flex-col gap-px"><div className="flex-1 bg-[#8a8a8a] border-t border-l border-[#2b3f9c]" /><div className="h-[2px] bg-[#8a8a8a]" /></div>
      </Cell>
      <Cell className="w-[24px]">
        <svg width="15" height="9" viewBox="0 0 15 9"><path d="M.5.500h12v8H.5z" fill="none" stroke="#fff" /><path d="M2 2h9v5H2z" fill="#fff" /><path d="M13.500 3H15v3h-1.500z" fill="#fff" /></svg>
      </Cell>
      <Cell className="w-[25px]">
        <svg width="14" height="13" viewBox="0 0 14 13" fill="none" stroke="#ccc" strokeWidth="1"><path d="M1 12.500A11 11 0 0112 1.500M4 12.500A8 8 0 0112 4.500M7 12.500A5 5 0 0112 7.500" /><circle cx="11" cy="11.500" r="1.300" fill="#fff" stroke="none" /></svg>
      </Cell>
      <Cell className="w-[23px]">
        <svg width="16" height="14" viewBox="0 0 16 14" fill="none" stroke="#fff" strokeWidth="1"><path d="M1 4.500h3L7.500 1v12L4 9.500H1zM10 4q1.500 3 0 6M12.500 2q2.500 5 0 10" /></svg>
      </Cell>
      <Cell className="w-[37px]">ENG</Cell>
      <Cell className="w-[58px]">01:09 PM</Cell>
      <Cell className="w-[44px]">
        <svg width="16" height="16" viewBox="0 0 16 16"><path d="M0 0h16v13H10l-2 2.500L6 13H0z" fill="#fff" /><path d="M3 3.500h10M3 6.500h10M3 9.500h6" stroke="#18272b" strokeWidth="1" /></svg>
      </Cell>
      <div className="w-[11px] shrink-0" />
    </div>
  );
}

export default function App() {
  return (
    <div className="relative w-[1366px] h-[768px] overflow-hidden flex flex-col bg-[#f3f3f3] font-['Lato',sans-serif]">
      <div className="h-[22px] bg-white flex items-center shrink-0 font-['Roboto',sans-serif] text-[11.850px] text-[#111]">
        <span className="ml-[3px] mr-[4px] flex"><TableauLogo size={16} /></span>
        Tableau - nm proect 2 - Tableau license expires in 14 days
        <div className="flex-1" />
        <svg width="11" height="2" viewBox="0 0 11 2" className="mr-[38px]"><path d="M0 .5h11" stroke="#222" /></svg>
        <svg width="10" height="10" viewBox="0 0 10 10" fill="none" stroke="#222" className="mr-[36px]"><path d="M.5 2.500h7v7h-7zM2.500 2.500v-2h7v7h-2" /></svg>
        <svg width="11" height="11" viewBox="0 0 11 11" fill="none" stroke="#222" className="mr-[18px]"><path d="M.5.500l10 10M10.500.5l-10 10" /></svg>
      </div>
      <div className="h-[21px] bg-white flex items-center gap-[15px] pl-[8px] shrink-0 font-['Roboto',sans-serif] text-[12px] text-[#111]">
        {['File', 'Data', 'Worksheet', 'Dashboard', 'Story', 'Analysis', 'Map', 'Format', 'Server', 'Window', 'Help'].map(m => (
          <span key={m}>{m}</span>
        ))}
      </div>
      <Toolbar />
      <div className="flex h-[602px] shrink-0">
        <DataPane />
        <MiddleCol />
        <MainCol />
      </div>
      <Tabs />
      <StatusBar />
      <Taskbar />
      <ShowMe />
    </div>
  );
}
